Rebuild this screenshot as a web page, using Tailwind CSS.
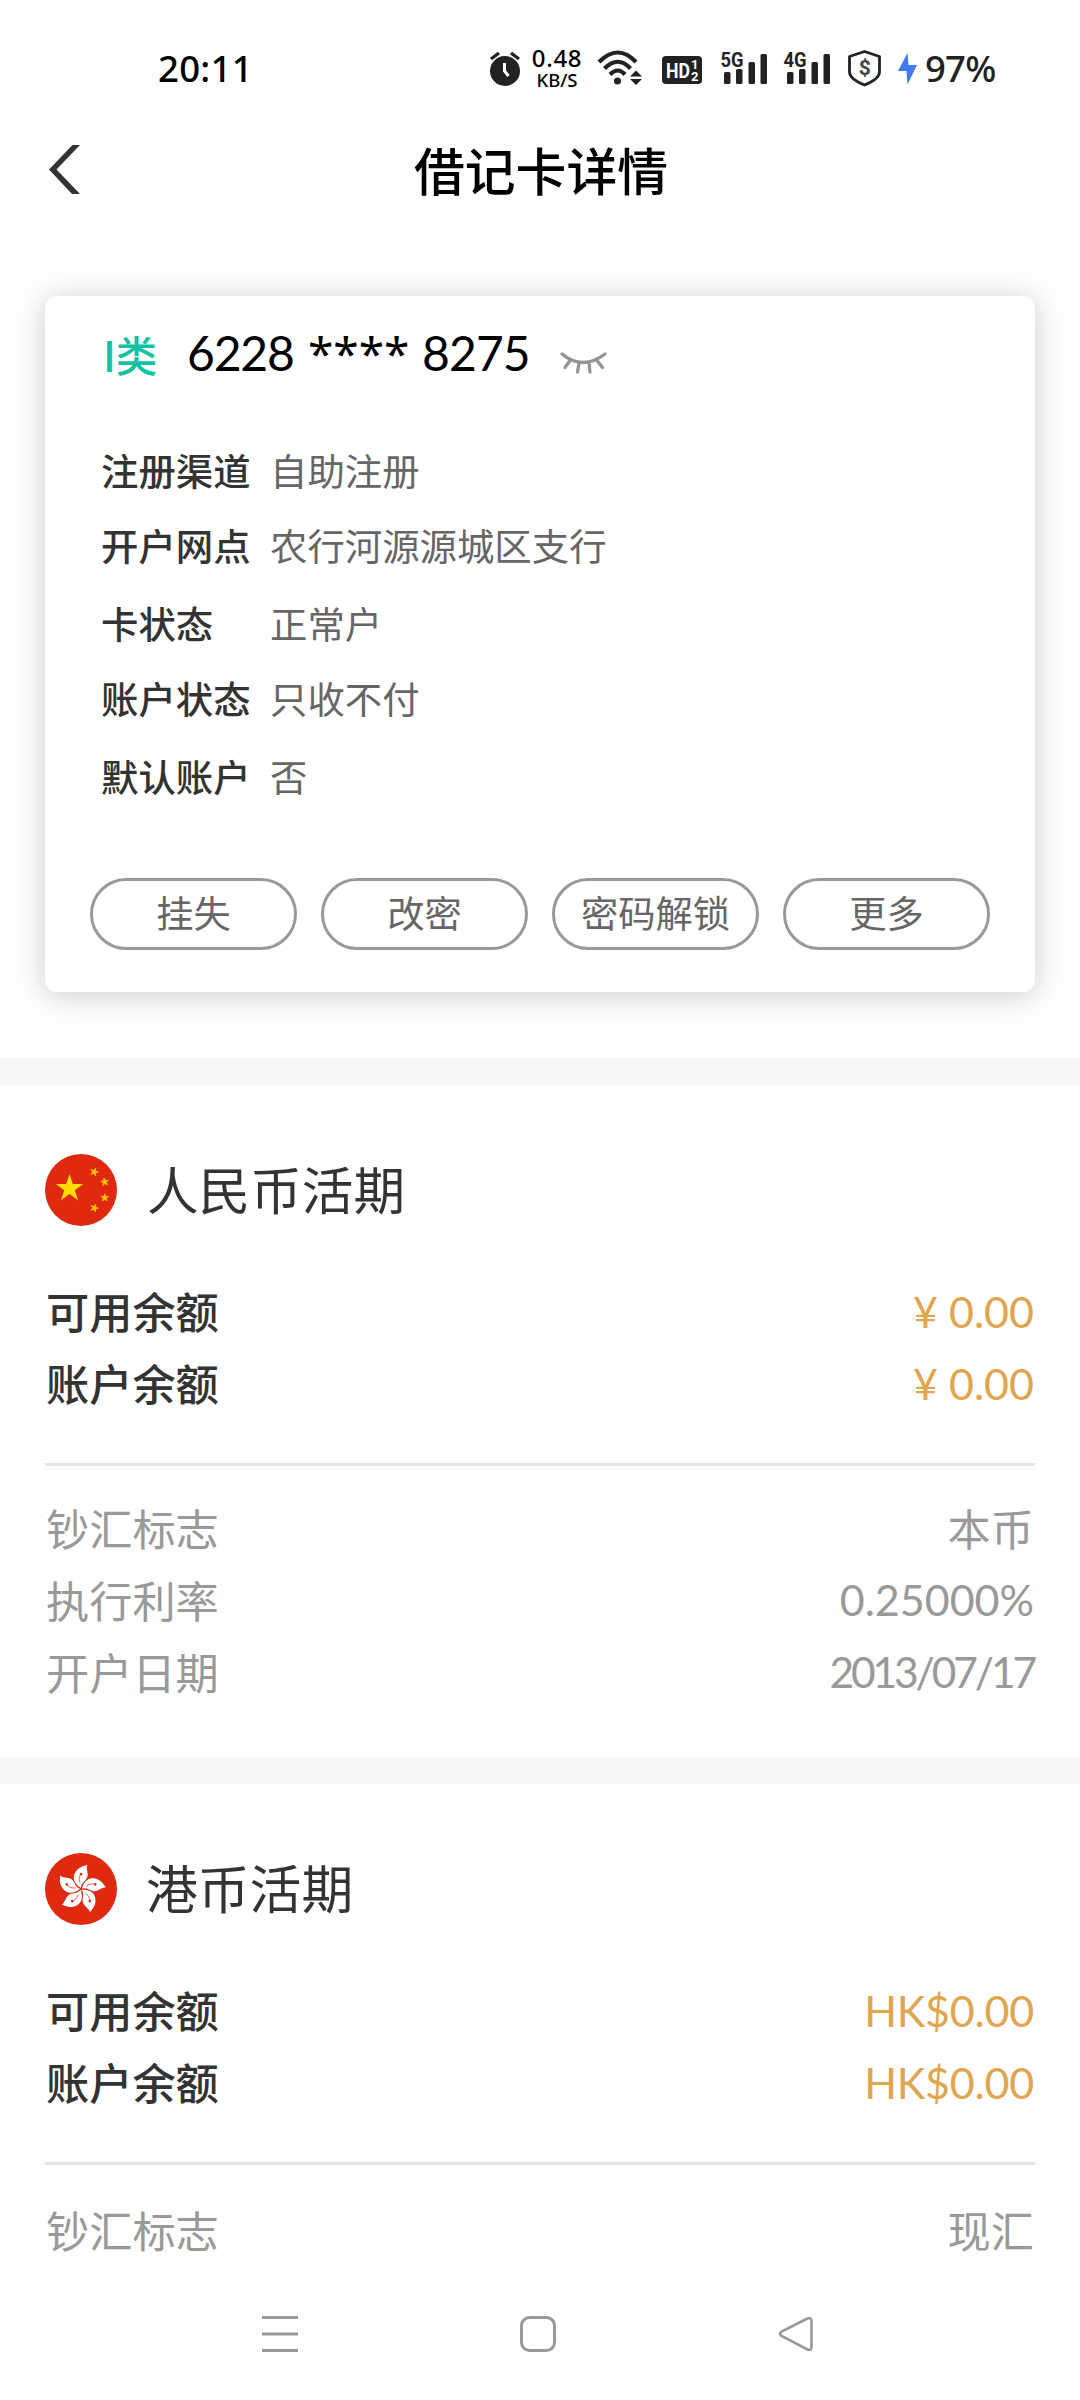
<!DOCTYPE html>
<html lang="zh-CN">
<head>
<meta charset="utf-8">
<title>借记卡详情</title>
<script src="https://cdn.jsdelivr.net/npm/@tailwindcss/browser@4"></script>
</head>
<body class="bg-white">
<div class="flex h-[2400px] w-[1080px] flex-col overflow-hidden bg-[#fefefe] font-['Noto_Sans_CJK_SC',sans-serif] text-[#333]">

  <!-- Status bar -->
  <div class="mt-12 flex h-10 shrink-0 items-center pl-[158px] text-[#222]">
    <span class="w-[330px] font-['Noto_Sans',sans-serif] text-[36.5px] leading-10 font-medium tracking-[0.3px] text-black">20:11</span>
    <svg class="w-[34px] shrink-0" height="40" viewBox="0 0 34 40"><circle cx="17" cy="23" r="15" fill="currentColor"/><path d="M3 11l8-6M31 11l-8-6" stroke="currentColor" stroke-width="3.4"/><path d="M16.5 15v8l4 5" fill="none" stroke="#fff" stroke-width="3"/></svg>
    <div class="ml-2 flex h-10 w-[54px] flex-col items-center font-['Noto_Sans',sans-serif] font-medium text-black">
      <span class="text-[24px] leading-[20px] tracking-[0.7px]">0.48</span>
      <span class="text-[18.5px] leading-[23px]">KB/S</span>
    </div>
    <svg class="ml-3 w-[48px] shrink-0" height="40" viewBox="0 0 48 40"><g fill="none" stroke="currentColor" stroke-width="4.2"><path d="M3 14Q22-5 40 14"/><path d="M8.500 20.500Q22 7 34.500 20.500"/><path d="M14 26.500Q22 18.500 29 26.500"/></g><circle cx="21.500" cy="33" r="3.500" fill="currentColor"/><path d="M34 28.500l6-6 6 6zM34 31h12l-6 6z" fill="currentColor"/></svg>
    <svg class="ml-4 w-[44px] shrink-0" height="40" viewBox="0 0 44 40"><rect x="2" y="8" width="40" height="28" rx="4" fill="currentColor"/><g fill="#fff" font-family="Roboto, sans-serif" font-weight="700"><text x="6" y="29.500" font-size="20" textLength="24" lengthAdjust="spacingAndGlyphs">HD</text><text x="31" y="21" font-size="13">1</text><text x="31" y="33" font-size="13">2</text></g></svg>
    <svg class="ml-[14px] w-[52px] shrink-0" height="40" viewBox="0 0 52 40" fill="currentColor"><text x="2.500" y="19" font-family="Roboto, sans-serif" font-weight="700" font-size="20.500" textLength="23" lengthAdjust="spacingAndGlyphs">5G</text><rect x="6" y="24" width="6.500" height="12" rx="1.500"/><rect x="18" y="21" width="6.500" height="15" rx="1.500"/><rect x="30.500" y="14" width="6.500" height="22" rx="1.500"/><rect x="42.500" y="6" width="6.500" height="30" rx="1.500"/></svg>
    <svg class="ml-[11px] w-[52px] shrink-0" height="40" viewBox="0 0 52 40" fill="currentColor"><text x="2.500" y="19" font-family="Roboto, sans-serif" font-weight="700" font-size="20.500" textLength="23" lengthAdjust="spacingAndGlyphs">4G</text><rect x="6" y="24" width="6.500" height="12" rx="1.500"/><rect x="18" y="21" width="6.500" height="15" rx="1.500"/><rect x="30.500" y="14" width="6.500" height="22" rx="1.500"/><rect x="42.500" y="6" width="6.500" height="30" rx="1.500"/></svg>
    <svg class="ml-[13px] w-[38px] shrink-0" height="40" viewBox="0 0 38 40"><path d="M18.500 3.500L33.500 8.500V24Q33.500 31 18.500 37Q3.500 31 3.500 24V8.500Z" fill="none" stroke="currentColor" stroke-width="2.800" stroke-linejoin="round"/><text x="18.700" y="27" text-anchor="middle" font-family="Roboto, sans-serif" font-weight="700" font-size="21" fill="#444">$</text></svg>
    <svg class="ml-3 w-[23px] shrink-0" height="40" viewBox="0 0 23 40"><path d="M11.500 5L2 23h8.500l1 13.500L21 17h-8.500z" fill="#4379f2"/></svg>
    <span class="ml-1.5 font-['Noto_Sans',sans-serif] text-[36.5px] leading-10 font-medium tracking-[-0.8px]">97%</span>
  </div>

  <!-- Title bar -->
  <div class="grid h-[162px] shrink-0 grid-cols-[120px_1fr_118px] items-center">
    <svg class="ml-[49px]" width="32" height="49" viewBox="0 0 32 49"><path d="M23.500 0H31L7.500 24.500 31 49H23L0 24.500Z" fill="#333"/></svg>
    <h1 class="text-center text-[50.8px] leading-[60px] font-medium text-black">借记卡详情</h1>
  </div>

  <!-- Card -->
  <section class="mx-[45px] mt-[46px] flex h-[696px] shrink-0 flex-col rounded-xl bg-white shadow-[0_3px_30px_rgba(0,0,0,0.2)]">
    <div class="flex h-[116px] items-center pl-[58px]">
      <span class="w-[84px] text-[41.5px] font-medium text-[#13c2a3]">I类</span>
      <div class="flex w-[371px] items-baseline pb-0.5 font-['Lato',sans-serif] text-[48px] leading-[60px] text-black">
        <span class="w-[121px] tracking-[-1.2px]">6228</span>
        <span class="w-[114px] font-['Noto_Sans',sans-serif] text-[46px]">****</span>
        <span class="tracking-[-0.9px]">8275</span>
      </div>
      <svg class="mt-[15px]" width="50" height="26" viewBox="0 0 50 26" fill="none" stroke="#949494" stroke-width="3.300" stroke-linecap="round"><path d="M4 5Q25 22 47 5M12 11.500L7 18.500M21 14L19.500 23M31 14L32 23M39 11.500L44.500 18.500"/></svg>
    </div>
    <div class="mt-5 pl-14 text-[37.4px]">
      <div class="flex h-[76px] items-center"><span class="w-[169px] font-medium">注册渠道</span><span class="text-[#666]">自助注册</span></div>
      <div class="flex h-[75px] items-center"><span class="w-[169px] font-medium">开户网点</span><span class="text-[#666]">农行河源源城区支行</span></div>
      <div class="flex h-[80px] items-center"><span class="w-[169px] font-medium">卡状态</span><span class="text-[#666]">正常户</span></div>
      <div class="flex h-[70px] items-center"><span class="w-[169px] font-medium">账户状态</span><span class="text-[#666]">只收不付</span></div>
      <div class="flex h-[86px] items-center"><span class="w-[169px] font-medium">默认账户</span><span class="text-[#666]">否</span></div>
    </div>
    <div class="mx-[45px] mt-[59px] grid grid-cols-4 gap-6 text-[37.3px] text-[#666]">
      <button class="flex h-[72px] items-center justify-center rounded-full border-3 border-[#999] pb-[3px] whitespace-nowrap">挂失</button>
      <button class="flex h-[72px] items-center justify-center rounded-full border-3 border-[#999] pb-[3px] whitespace-nowrap">改密</button>
      <button class="flex h-[72px] items-center justify-center rounded-full border-3 border-[#999] pb-[3px] whitespace-nowrap">密码解锁</button>
      <button class="flex h-[72px] items-center justify-center rounded-full border-3 border-[#999] pb-[3px] whitespace-nowrap">更多</button>
    </div>
  </section>

  <div class="mt-[66px] h-[27px] shrink-0 bg-[#f6f6f6]"></div>

  <!-- CNY account -->
  <section class="shrink-0 px-[45px] pt-[69px] pb-[50px] text-[43.2px] leading-[72px]">
    <div class="flex h-[72px] items-center">
      <svg width="72" height="72" viewBox="0 0 72 72">
        <defs><path id="star" d="M0-1L.225-.309H.951L.363.118.588.809 0 .382-.588.809-.363.118-.951-.309H-.225Z"/></defs>
        <circle cx="36" cy="36" r="36" fill="#df2a10"/>
        <use href="#star" transform="translate(24.500 34.500) scale(14.500)" fill="#ffde00"/>
        <g fill="#ffc20a" stroke="#ffc20a" stroke-width=".2"><use href="#star" transform="translate(49.300 18) rotate(20) scale(4)"/><use href="#star" transform="translate(59.700 28) rotate(-10) scale(4)"/><use href="#star" transform="translate(59.700 43.700) scale(4)"/><use href="#star" transform="translate(49.300 54) rotate(20) scale(4)"/></g>
      </svg>
      <h2 class="ml-[30px] pb-[5px] text-[51.6px]">人民币活期</h2>
    </div>
    <div class="mt-12 flex h-[72px] justify-between px-px"><span class="font-medium">可用余额</span><span class="pt-0.5 font-['Lato',sans-serif] text-[43px] text-[#dfa64f]">¥ 0.00</span></div>
    <div class="flex h-[72px] justify-between px-px"><span class="font-medium">账户余额</span><span class="pt-0.5 font-['Lato',sans-serif] text-[43px] text-[#dfa64f]">¥ 0.00</span></div>
    <div class="mt-[45px] h-[3px] bg-[#e5e5e5]"></div>
    <div class="mt-[25px] px-px text-[#999]">
      <div class="flex h-[72px] justify-between"><span>钞汇标志</span><span>本币</span></div>
      <div class="flex h-[72px] justify-between"><span>执行利率</span><span class="pt-px font-['Lato',sans-serif] text-[43px]">0.25000%</span></div>
      <div class="flex h-[72px] justify-between"><span>开户日期</span><span class="pt-px font-['Lato',sans-serif] text-[42.5px] tracking-[-3.1px]">2013/07/17</span></div>
    </div>
  </section>

  <div class="h-[27px] shrink-0 bg-[#f6f6f6]"></div>

  <!-- HKD account -->
  <section class="shrink-0 px-[45px] pt-[69px] text-[43.2px] leading-[72px]">
    <div class="flex h-[72px] items-center">
      <svg width="72" height="72" viewBox="-36 -36 72 72">
        <defs><g id="petal"><path d="M0-1C-5-4-9-9-6.500-15-4.500-20 0-23 6.500-24 4.500-21 7.500-17 6.500-12.500 5.500-8 0-7 0-1Z" fill="#fff"/><path d="M-1-6Q-3-10-.5-15" fill="none" stroke="#df2a10" stroke-width=".7"/><circle cx="0" cy="-15" r="1.300" fill="#df2a10"/></g></defs>
        <circle r="36" fill="#df2a10"/>
        <use href="#petal"/><use href="#petal" transform="rotate(72)"/><use href="#petal" transform="rotate(144)"/><use href="#petal" transform="rotate(216)"/><use href="#petal" transform="rotate(288)"/>
      </svg>
      <h2 class="ml-[29px] pb-[5px] text-[51.8px]">港币活期</h2>
    </div>
    <div class="mt-12 flex h-[72px] justify-between px-px"><span class="font-medium">可用余额</span><span class="pt-0.5 font-['Lato',sans-serif] text-[43px] tracking-[-0.2px] text-[#dfa64f]">HK$0.00</span></div>
    <div class="flex h-[72px] justify-between px-px"><span class="font-medium">账户余额</span><span class="pt-0.5 font-['Lato',sans-serif] text-[43px] tracking-[-0.2px] text-[#dfa64f]">HK$0.00</span></div>
    <div class="mt-[45px] h-[3px] bg-[#e5e5e5]"></div>
    <div class="mt-7 flex h-[72px] justify-between px-px text-[#999]"><span>钞汇标志</span><span>现汇</span></div>
  </section>

  <!-- Navigation bar -->
  <nav class="mt-[51px] flex h-9 shrink-0 justify-between pr-[266px] pl-[262px]">
    <svg width="36" height="36" viewBox="0 0 36 36"><path d="M0 1.500h36M0 18h36M0 34.500h36" stroke="#999" stroke-width="3"/></svg>
    <svg width="36" height="36" viewBox="0 0 36 36"><rect x="1.500" y="1.500" width="33" height="33" rx="8" fill="none" stroke="#999" stroke-width="3"/></svg>
    <svg width="36" height="36" viewBox="0 0 36 36"><path d="M29.500 2.500L3.500 15.500Q0.500 17.800 3.500 20L29.500 33.500Q33.500 35 33.500 31V5Q33.500 1 29.500 2.500Z" fill="none" stroke="#999" stroke-width="2.600"/></svg>
  </nav>
</div>
</body>
</html>
